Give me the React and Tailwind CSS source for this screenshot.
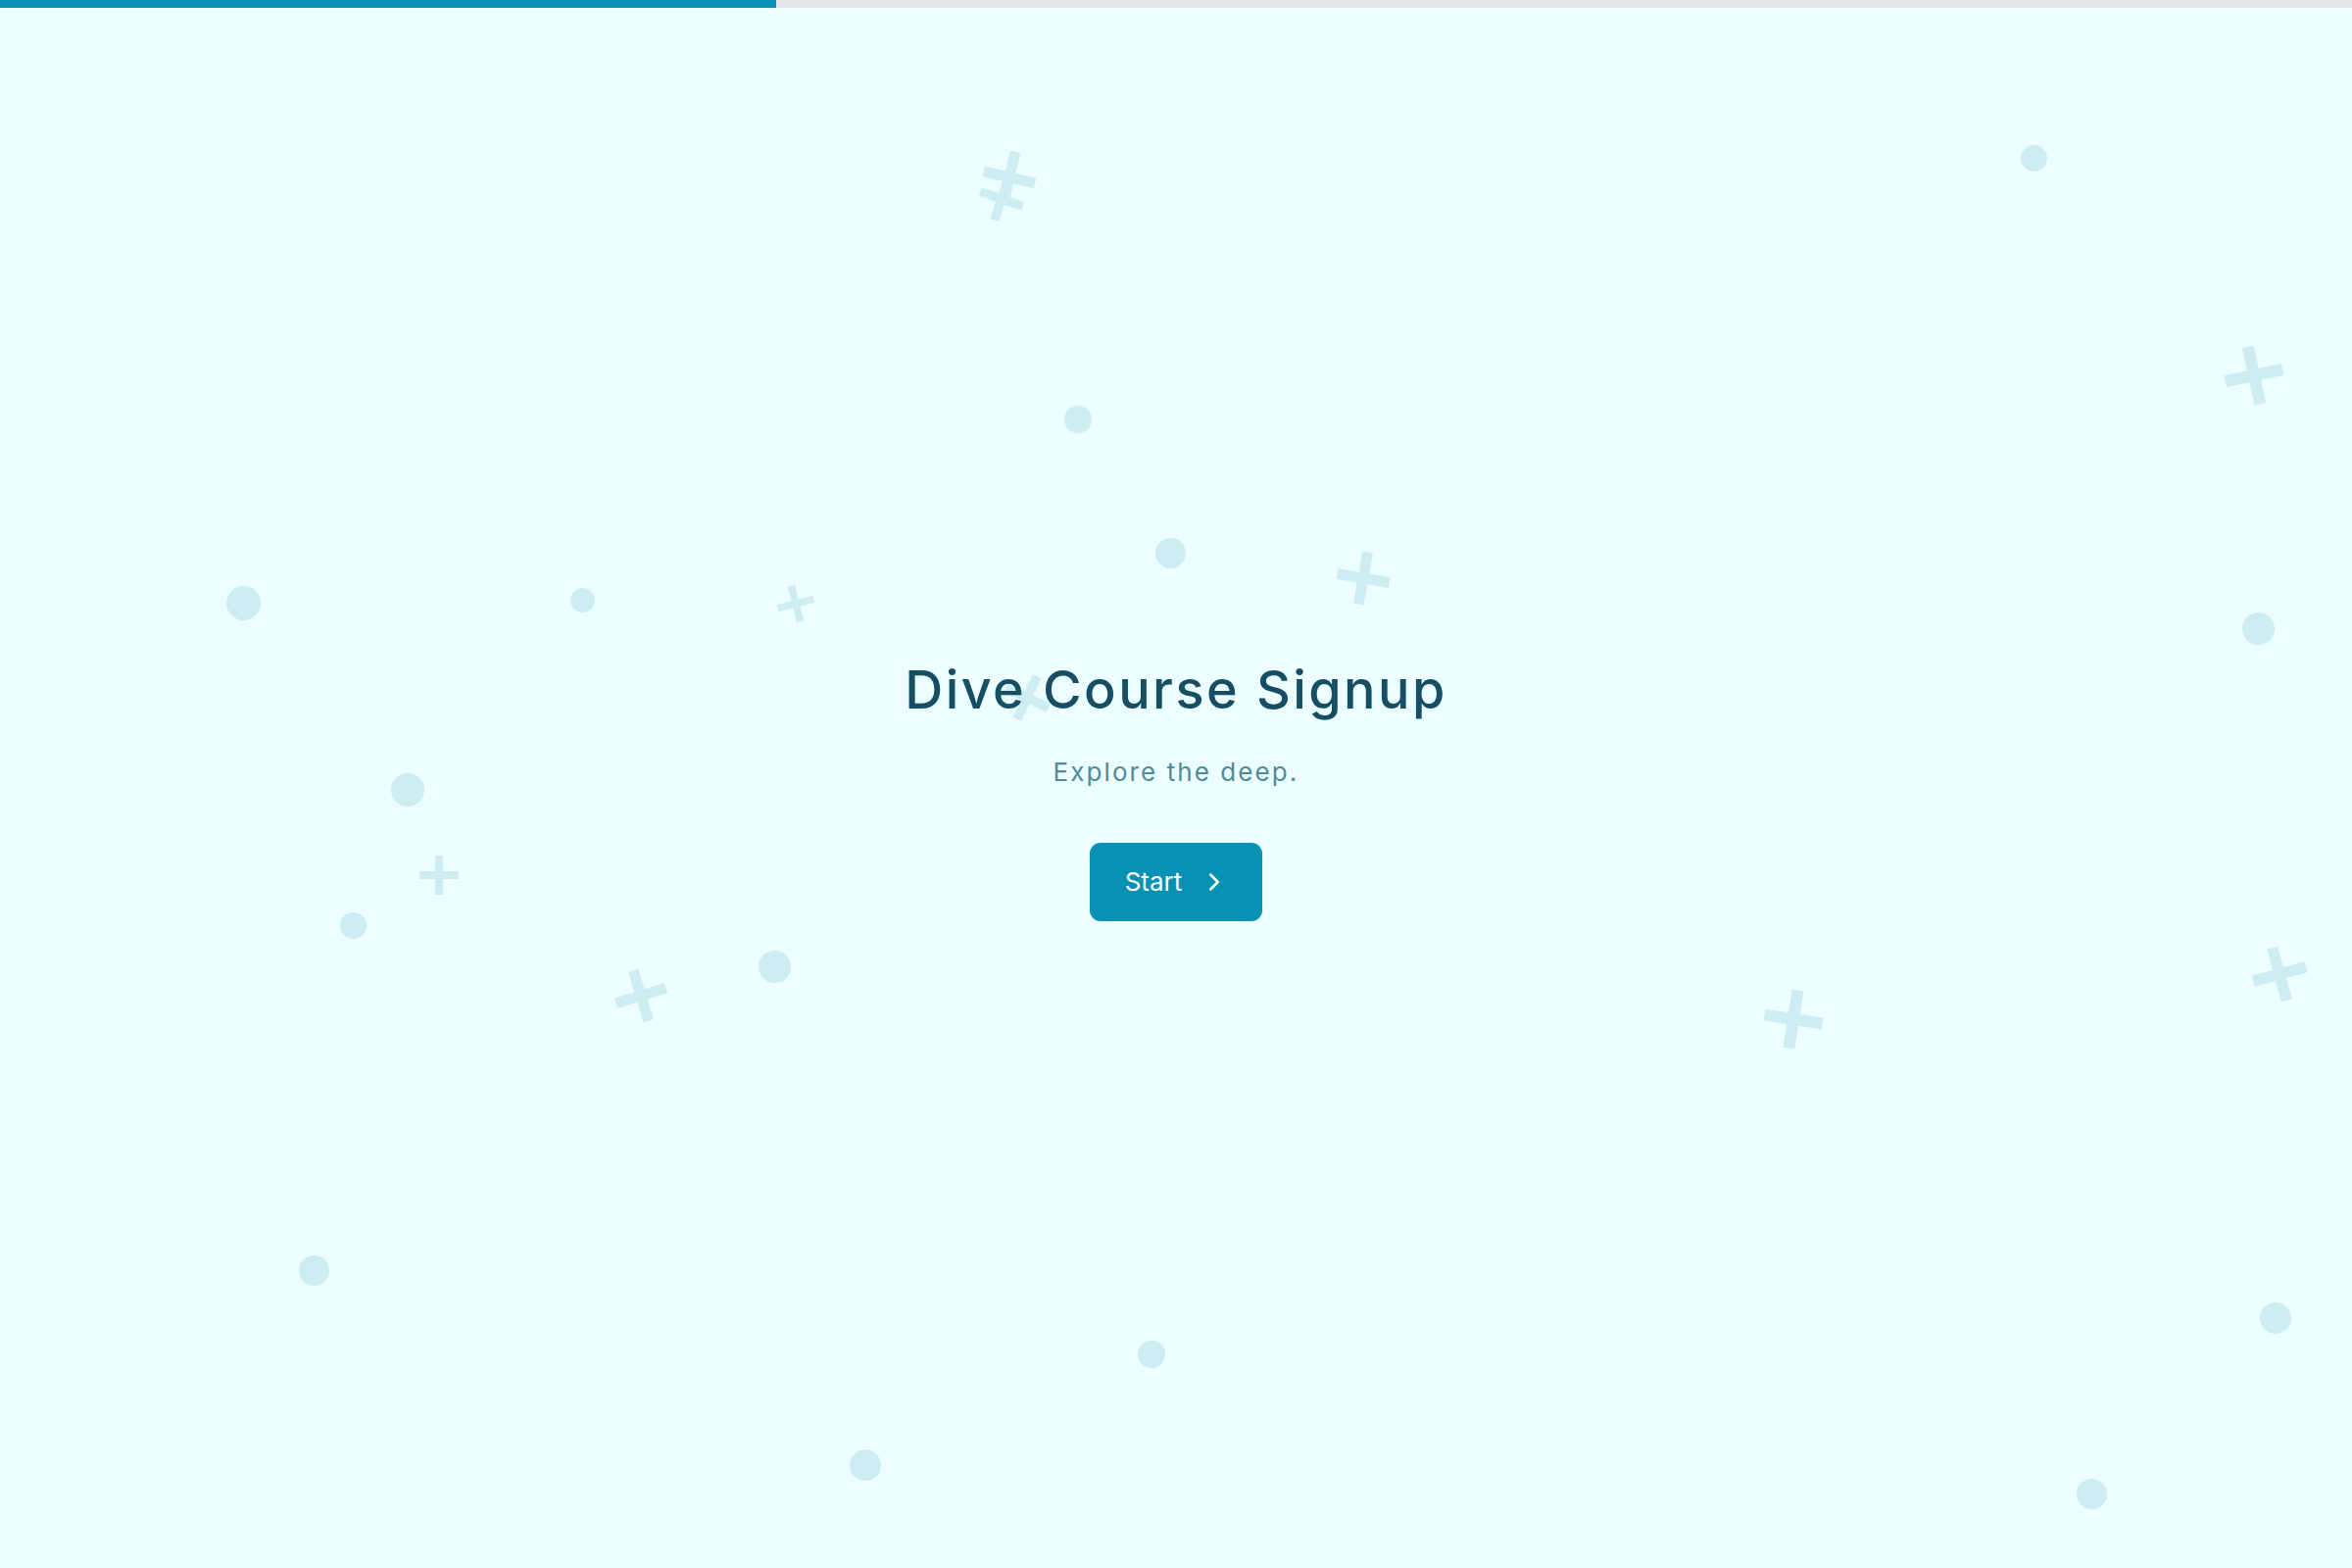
import React from "react";
import { ChevronRight } from "lucide-react";

const circles = [
  { x: 2075, y: 161, d: 27 },
  { x: 1100, y: 428, d: 28 },
  { x: 1194, y: 564, d: 31 },
  { x: 248, y: 615, d: 35 },
  { x: 594, y: 612, d: 25 },
  { x: 2304, y: 641, d: 33 },
  { x: 416, y: 806, d: 34 },
  { x: 360, y: 944, d: 27 },
  { x: 790, y: 986, d: 33 },
  { x: 320, y: 1296, d: 31 },
  { x: 1175, y: 1382, d: 28 },
  { x: 2322, y: 1345, d: 32 },
  { x: 883, y: 1495, d: 32 },
  { x: 2134, y: 1524, d: 31 },
];

const pluses = [
  { x: 1030, y: 181, s: 54, r: 13 },
  { x: 1022, y: 203, s: 46, r: 19 },
  { x: 2300, y: 383, s: 60, r: -12 },
  { x: 1391, y: 590, s: 54, r: 10 },
  { x: 812, y: 616, s: 38, r: -14 },
  { x: 1048, y: 712, s: 48, r: 25 },
  { x: 448, y: 893, s: 40, r: 0 },
  { x: 654, y: 1016, s: 54, r: -17 },
  { x: 1830, y: 1040, s: 60, r: 9 },
  { x: 2326, y: 994, s: 56, r: -15 },
];

function Plus({ x, y, s, r }) {
  return (
    <svg
      className="absolute text-[#cdedf2]"
      width={s}
      height={s}
      viewBox="0 0 10 10"
      style={{ left: x - s / 2, top: y - s / 2, transform: `rotate(${r}deg)` }}
    >
      <rect x="4" y="0" width="2" height="10" fill="currentColor" />
      <rect x="0" y="4" width="10" height="2" fill="currentColor" />
    </svg>
  );
}

export default function App() {
  return (
    <div
      className="relative flex h-screen w-full flex-col overflow-hidden bg-[#ecfeff]"
      style={{ fontFamily: "Inter, 'Open Sans', sans-serif" }}
    >
      <div className="relative z-20 h-[8px] w-full bg-[#e5e7eb]">
        <div className="h-full w-[33%] bg-[#0891b2]" />
      </div>

      <div className="pointer-events-none absolute inset-0 z-0">
        {circles.map((c, i) => (
          <div
            key={i}
            className="absolute rounded-full bg-[#cdedf2]"
            style={{ left: c.x - c.d / 2, top: c.y - c.d / 2, width: c.d, height: c.d }}
          />
        ))}
        {pluses.map((p, i) => (
          <Plus key={i} {...p} />
        ))}
      </div>

      <main className="relative z-10 flex flex-1 flex-col items-center justify-center pt-[4px]">
        <h1 className="text-[54px] font-medium leading-[1.2] tracking-[0.045em] text-[#164e63]">
          Dive Course Signup
        </h1>
        <p className="mt-[35px] text-[26px] leading-[1.2] tracking-[0.08em] text-[#4f8b9b]">
          Explore the deep.
        </p>
        <button className="mt-[57px] flex h-[80px] items-center gap-[18px] rounded-[11px] bg-[#0891b2] pl-[36px] pr-[34px] text-[26px] font-normal text-white">
          <span>Start</span>
          <ChevronRight size={30} strokeWidth={2} />
        </button>
      </main>
    </div>
  );
}
